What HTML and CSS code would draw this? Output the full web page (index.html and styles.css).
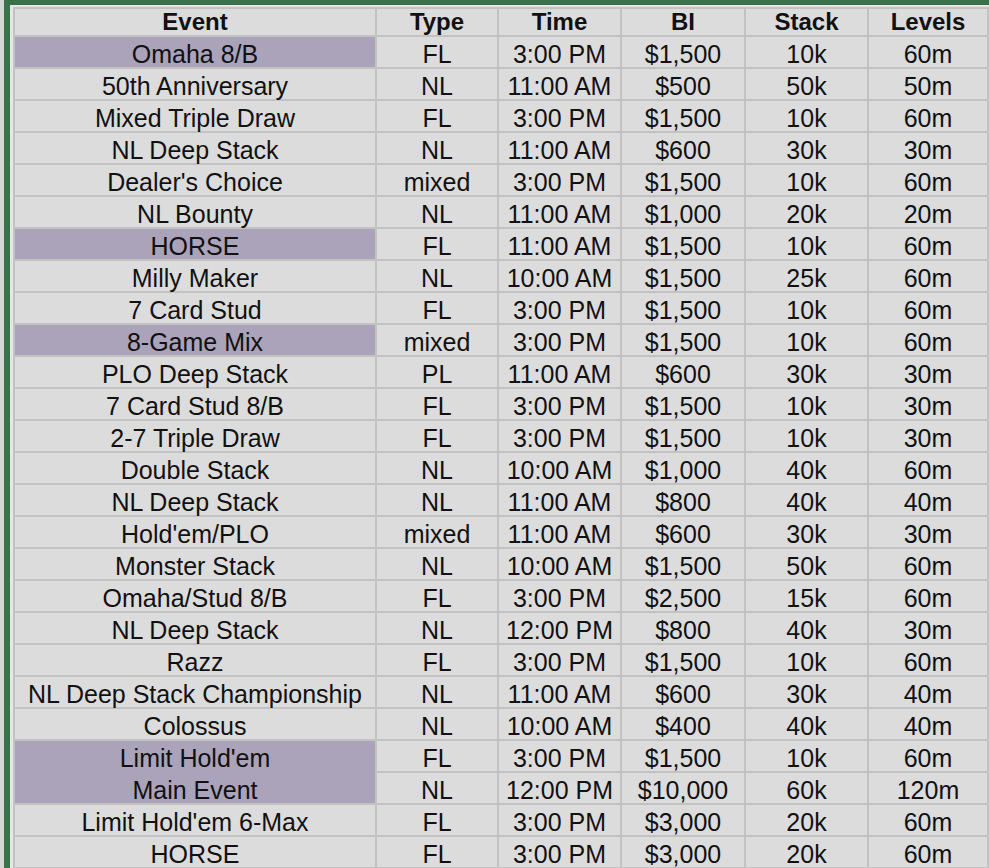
FILE: index.html
```html
<!DOCTYPE html>
<html>
<head>
<meta charset="utf-8">
<link rel="stylesheet" href="styles.css">
</head>
<body>
<div class="frame">
<table class="sched">
<colgroup>
<col class="c-event"><col class="c-type"><col class="c-time"><col class="c-bi"><col class="c-stack"><col class="c-levels">
</colgroup>
<thead>
<tr><th>Event</th><th>Type</th><th>Time</th><th>BI</th><th>Stack</th><th>Levels</th></tr>
</thead>
<tbody>
<tr><td class="hl">Omaha 8/B</td><td>FL</td><td>3:00 PM</td><td>$1,500</td><td>10k</td><td>60m</td></tr>
<tr><td>50th Anniversary</td><td>NL</td><td>11:00 AM</td><td>$500</td><td>50k</td><td>50m</td></tr>
<tr><td>Mixed Triple Draw</td><td>FL</td><td>3:00 PM</td><td>$1,500</td><td>10k</td><td>60m</td></tr>
<tr><td>NL Deep Stack</td><td>NL</td><td>11:00 AM</td><td>$600</td><td>30k</td><td>30m</td></tr>
<tr><td>Dealer's Choice</td><td>mixed</td><td>3:00 PM</td><td>$1,500</td><td>10k</td><td>60m</td></tr>
<tr><td>NL Bounty</td><td>NL</td><td>11:00 AM</td><td>$1,000</td><td>20k</td><td>20m</td></tr>
<tr><td class="hl">HORSE</td><td>FL</td><td>11:00 AM</td><td>$1,500</td><td>10k</td><td>60m</td></tr>
<tr><td>Milly Maker</td><td>NL</td><td>10:00 AM</td><td>$1,500</td><td>25k</td><td>60m</td></tr>
<tr><td>7 Card Stud</td><td>FL</td><td>3:00 PM</td><td>$1,500</td><td>10k</td><td>60m</td></tr>
<tr><td class="hl">8-Game Mix</td><td>mixed</td><td>3:00 PM</td><td>$1,500</td><td>10k</td><td>60m</td></tr>
<tr><td>PLO Deep Stack</td><td>PL</td><td>11:00 AM</td><td>$600</td><td>30k</td><td>30m</td></tr>
<tr><td>7 Card Stud 8/B</td><td>FL</td><td>3:00 PM</td><td>$1,500</td><td>10k</td><td>30m</td></tr>
<tr><td>2-7 Triple Draw</td><td>FL</td><td>3:00 PM</td><td>$1,500</td><td>10k</td><td>30m</td></tr>
<tr><td>Double Stack</td><td>NL</td><td>10:00 AM</td><td>$1,000</td><td>40k</td><td>60m</td></tr>
<tr><td>NL Deep Stack</td><td>NL</td><td>11:00 AM</td><td>$800</td><td>40k</td><td>40m</td></tr>
<tr><td>Hold'em/PLO</td><td>mixed</td><td>11:00 AM</td><td>$600</td><td>30k</td><td>30m</td></tr>
<tr><td>Monster Stack</td><td>NL</td><td>10:00 AM</td><td>$1,500</td><td>50k</td><td>60m</td></tr>
<tr><td>Omaha/Stud 8/B</td><td>FL</td><td>3:00 PM</td><td>$2,500</td><td>15k</td><td>60m</td></tr>
<tr><td>NL Deep Stack</td><td>NL</td><td>12:00 PM</td><td>$800</td><td>40k</td><td>30m</td></tr>
<tr><td>Razz</td><td>FL</td><td>3:00 PM</td><td>$1,500</td><td>10k</td><td>60m</td></tr>
<tr><td>NL Deep Stack Championship</td><td>NL</td><td>11:00 AM</td><td>$600</td><td>30k</td><td>40m</td></tr>
<tr><td>Colossus</td><td>NL</td><td>10:00 AM</td><td>$400</td><td>40k</td><td>40m</td></tr>
<tr><td class="hl hl-join">Limit Hold'em</td><td>FL</td><td>3:00 PM</td><td>$1,500</td><td>10k</td><td>60m</td></tr>
<tr><td class="hl">Main Event</td><td>NL</td><td>12:00 PM</td><td>$10,000</td><td>60k</td><td>120m</td></tr>
<tr><td>Limit Hold'em 6-Max</td><td>FL</td><td>3:00 PM</td><td>$3,000</td><td>20k</td><td>60m</td></tr>
<tr><td>HORSE</td><td>FL</td><td>3:00 PM</td><td>$3,000</td><td>20k</td><td>60m</td></tr>
</tbody>
</table>
</div>
</body>
</html>
```
FILE: styles.css
```css
html, body {
  margin: 0;
  padding: 0;
  background: #d6d6d6;
  overflow: hidden;
}
.frame {
  margin-left: 4px;
  border-left: 6px solid #3a704a;
  border-top: 5px solid #3a704a;
  padding: 2px 0 0 3px;
  background: #e6e6e6;
  height: 900px;
}
.sched {
  border-collapse: separate;
  border-spacing: 2px;
  table-layout: fixed;
  width: 974px;
  background: #c2c2c2;
  font-family: "Liberation Sans", Arial, sans-serif;
  color: #111;
}
.c-event { width: 360px; }
.c-type { width: 120px; }
.c-time { width: 121px; }
.c-bi { width: 122px; }
.c-stack { width: 121px; }
.c-levels { width: 118px; }
.sched th,
.sched td {
  background: #dcdcdc;
  text-align: center;
  white-space: nowrap;
  padding: 0;
}
.sched th {
  font-size: 24px;
  font-weight: bold;
  height: 26px;
  line-height: 26px;
}
.sched td {
  font-size: 25px;
  height: 26px;
  line-height: 26px;
  padding-top: 4px;
}
.sched td.hl {
  background: #aaa3b9;
}
.sched td.hl-join {
  box-shadow: 0 2px 0 #aaa3b9;
}
```
